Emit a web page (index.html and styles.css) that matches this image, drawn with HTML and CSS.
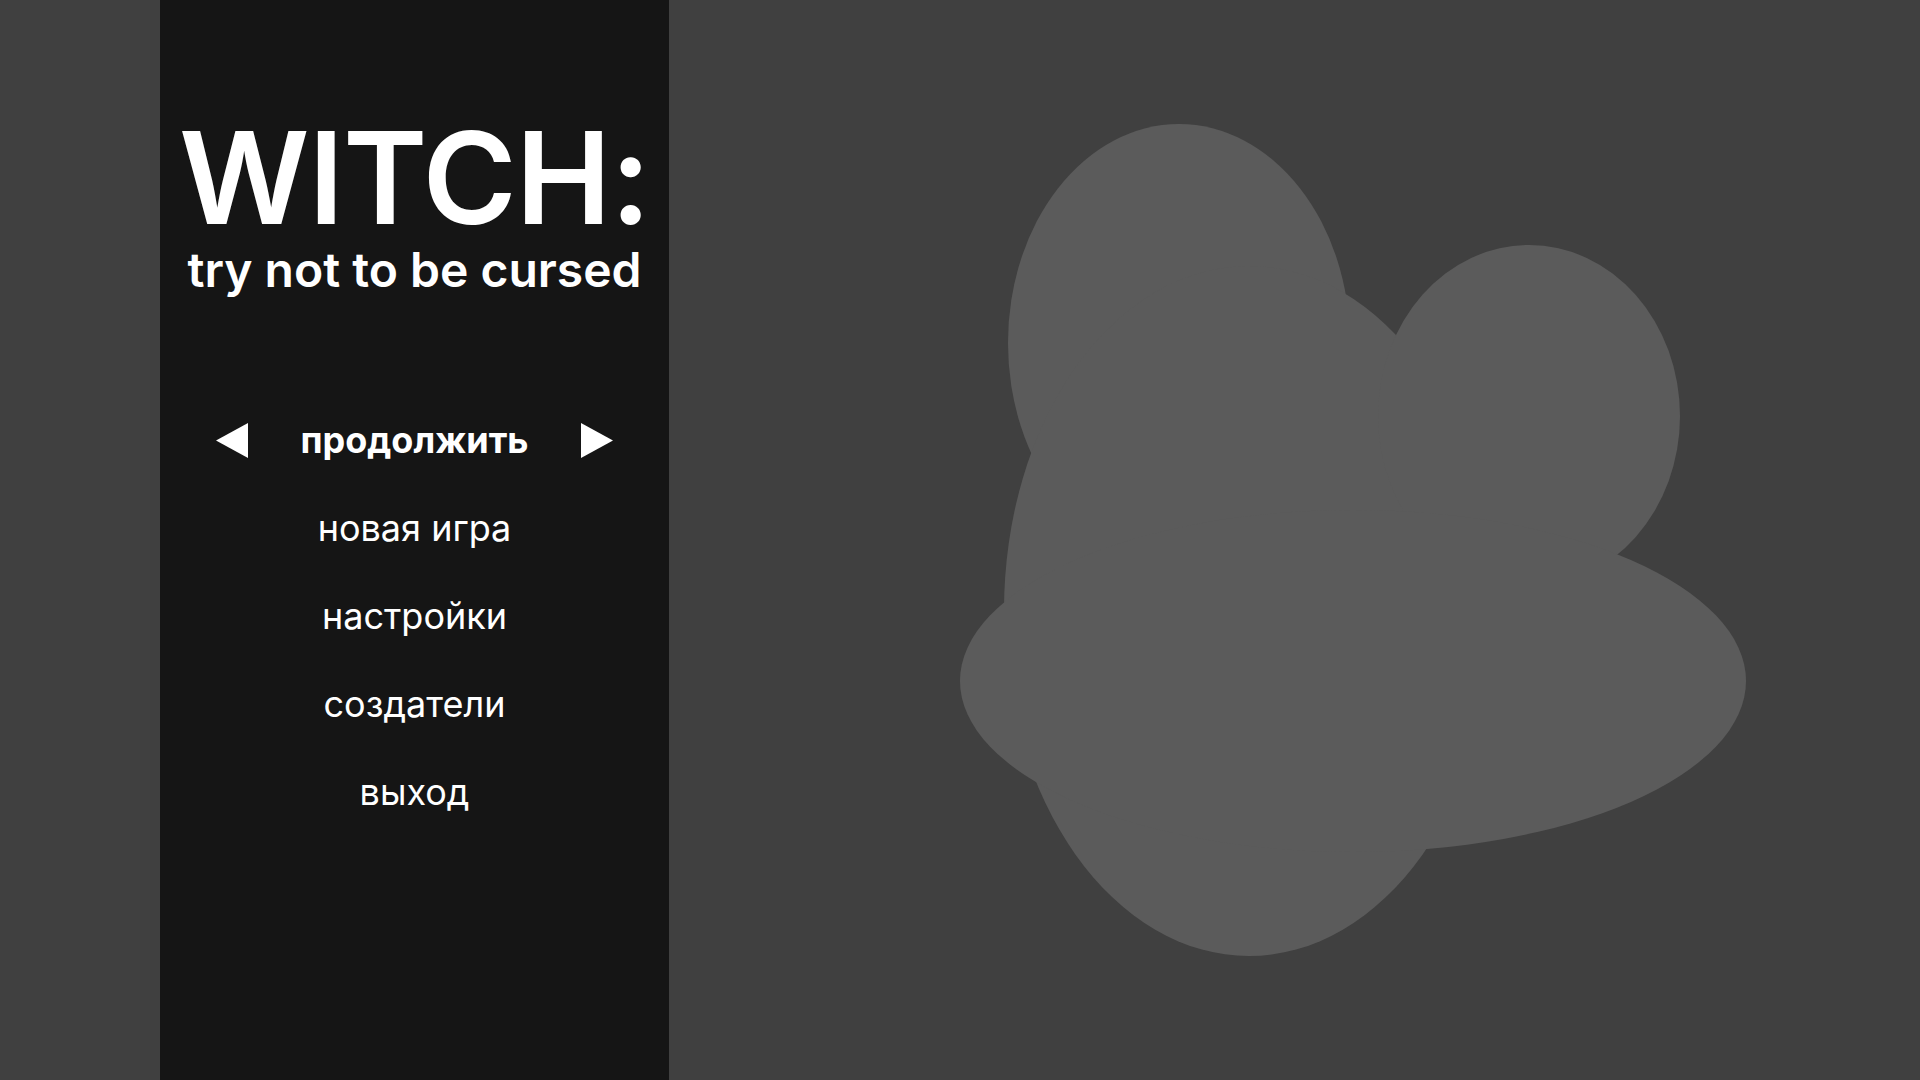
FILE: index.html
```html
<!DOCTYPE html>
<html lang="ru">
<head>
<meta charset="utf-8">
<title>WITCH: try not to be cursed</title>
<link rel="stylesheet" href="styles.css">
</head>
<body>
<div class="screen">
  <div class="gutter"></div>
  <aside class="sidebar">
    <header class="title">
      <h1 class="title-main">WITCH:</h1>
      <p class="title-sub">try not to be cursed</p>
    </header>
    <nav class="menu">
      <div class="menu-item active">
        <svg class="arrow" viewBox="0 0 32 35" width="32" height="35"><polygon points="0,17.5 32,0 32,35" fill="#fff"/></svg>
        <span class="label">продолжить</span>
        <svg class="arrow" viewBox="0 0 32 35" width="32" height="35"><polygon points="32,17.5 0,0 0,35" fill="#fff"/></svg>
      </div>
      <div class="menu-item"><span class="label">новая игра</span></div>
      <div class="menu-item"><span class="label">настройки</span></div>
      <div class="menu-item"><span class="label">создатели</span></div>
      <div class="menu-item"><span class="label">выход</span></div>
    </nav>
  </aside>
  <main class="stage">
    <svg class="blob" viewBox="669 0 1251 1080" preserveAspectRatio="xMinYMin meet">
      <g fill="#5b5b5b">
        <ellipse cx="1179" cy="343" rx="171" ry="219"/>
        <ellipse cx="1249" cy="611" rx="245" ry="345"/>
        <ellipse cx="1529" cy="416" rx="151" ry="171"/>
        <ellipse cx="1353" cy="681" rx="393" ry="171"/>
      </g>
    </svg>
  </main>
</div>
</body>
</html>
```
FILE: styles.css
```css
* { box-sizing: border-box; }
html, body { margin: 0; padding: 0; }
body {
  background: #404040;
  font-family: Inter, "Noto Sans", "Liberation Sans", sans-serif;
  color: #ffffff;
}
.screen {
  display: flex;
  width: 1920px;
  height: 1080px;
  overflow: hidden;
}
.gutter { width: 160px; flex: none; }
.sidebar {
  width: 509px;
  flex: none;
  background: #151515;
  display: flex;
  flex-direction: column;
  align-items: center;
  padding-top: 128px;
}
.title {
  display: flex;
  flex-direction: column;
  align-items: center;
}
.title-main {
  margin: 0;
  font-size: 128px;
  font-weight: 600;
  line-height: 100px;
  letter-spacing: -1px;
  white-space: nowrap;
}
.title-sub {
  margin: 18px 0 0;
  font-size: 48px;
  font-weight: 600;
  line-height: 48px;
  white-space: nowrap;
}
.menu {
  margin-top: 122px;
  display: flex;
  flex-direction: column;
  align-items: center;
  gap: 40px;
}
.menu-item {
  height: 48px;
  display: flex;
  align-items: center;
  justify-content: center;
  gap: 52px;
  font-size: 36px;
  line-height: 48px;
  white-space: nowrap;
}
.menu-item.active .label { font-weight: 700; }
.arrow { display: block; flex: none; }
.stage { flex: 1; position: relative; }
.blob { display: block; width: 1251px; height: 1080px; }
```
